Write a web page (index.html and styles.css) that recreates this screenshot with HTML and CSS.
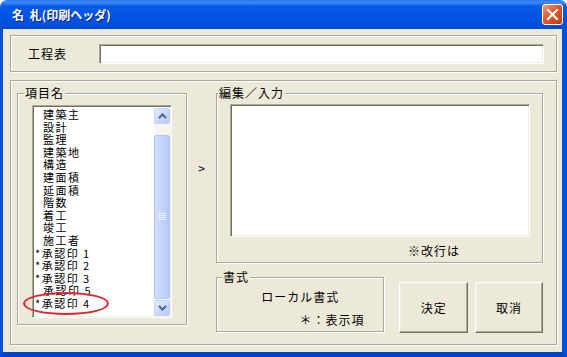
FILE: index.html
```html
<!DOCTYPE html>
<html lang="ja">

<head>
    <meta charset="UTF-8">
    <meta name="viewport" content="width=device-width, initial-scale=1.0">
    <title>名札(印刷ヘッダ)</title>
    <link rel="stylesheet" href="styles.css">
</head>

<body>
    <div class="window">
        <div class="titlebar">
            <span class="title">名 札(印刷ヘッダ)</span>
            <div class="close">
                <svg width="13" height="13" viewBox="0 0 13 13">
                    <path d="M2 2 L11 11 M11 2 L2 11" stroke="#fff" stroke-width="2.2" stroke-linecap="square" />
                </svg>
            </div>
        </div>

        <div class="client">
            <div class="frame header-frame">
                <span class="field-label">工程表</span>
                <div class="textbox header-box"></div>
            </div>

            <div class="frame main-frame">
                <div class="group item-group">
                    <span class="group-title">項目名</span>
                    <div class="listbox">
                        <ul class="items">
                            <li>建築主</li>
                            <li>設計</li>
                            <li>監理</li>
                            <li>建築地</li>
                            <li>構造</li>
                            <li>建面積</li>
                            <li>延面積</li>
                            <li>階数</li>
                            <li>着工</li>
                            <li>竣工</li>
                            <li>施工者</li>
                            <li class="mark">*承認印 1</li>
                            <li class="mark">*承認印 2</li>
                            <li class="mark">*承認印 3</li>
                            <li>承認印 5</li>
                            <li class="mark">*承認印 4</li>
                        </ul>
                        <div class="scrollbar">
                            <div class="sb-btn">
                                <svg width="9" height="6" viewBox="0 0 9 6">
                                    <path d="M1 5 L4.5 1.5 L8 5" fill="none" stroke="#4d6185" stroke-width="2" />
                                </svg>
                            </div>
                            <div class="sb-track">
                                <div class="sb-thumb"><span class="grip"></span></div>
                            </div>
                            <div class="sb-btn">
                                <svg width="9" height="6" viewBox="0 0 9 6">
                                    <path d="M1 1 L4.5 4.5 L8 1" fill="none" stroke="#4d6185" stroke-width="2" />
                                </svg>
                            </div>
                        </div>
                    </div>
                    <div class="highlight"></div>
                </div>

                <div class="arrow-col">&gt;</div>

                <div class="edit-col">
                    <div class="group edit-group">
                        <span class="group-title">編集／入力</span>
                        <div class="textbox edit-box"></div>
                        <div class="note">※改行は</div>
                    </div>

                    <div class="bottom-row">
                        <div class="group format-group">
                            <span class="group-title">書式</span>
                            <div class="format-name">ローカル書式</div>
                            <div class="format-note">＊：表示項</div>
                        </div>
                        <button type="button" class="btn ok-btn">決定</button>
                        <button type="button" class="btn cancel-btn">取消</button>
                    </div>
                </div>
            </div>
        </div>
    </div>
</body>

</html>
```

FILE: styles.css
```css
body {
    margin: 0;
    background-color: #fff;
    font-family: "Noto Sans CJK JP", "DejaVu Sans", sans-serif;
    font-size: 12px;
    color: #000;
}

.window {
    width: 567px;
    height: 357px;
    display: flex;
    flex-direction: column;
    border-radius: 7px 7px 0 0;
    overflow: hidden;
}

/* title bar */
.titlebar {
    height: 29px;
    flex-shrink: 0;
    display: flex;
    align-items: center;
    justify-content: space-between;
    background: linear-gradient(#2a73ee 0%, #3d8cfa 8%, #0a5ae6 22%, #0055e5 60%, #0049d6 100%);
}

.title {
    padding-left: 12px;
    color: #fff;
    font-weight: bold;
    font-size: 12px;
    line-height: 14px;
    word-spacing: 3px;
    text-shadow: 1px 1px 0 #0a1e80;
}

.close {
    width: 19px;
    height: 19px;
    margin-right: 4px;
    border: 1px solid #fff;
    border-radius: 3px;
    background: linear-gradient(135deg, #f09a7a 0%, #e2562b 45%, #c93c12 100%);
    display: flex;
    align-items: center;
    justify-content: center;
}

/* client area */
.client {
    flex: 1;
    box-sizing: border-box;
    background-color: #ece9d8;
    border-left: 3px solid #0050e0;
    border-right: 5px solid #0050e0;
    border-bottom: 5px solid #0044cc;
    padding-top: 6px;
}

.frame {
    box-sizing: border-box;
    width: 547px;
    margin-left: 7px;
    border: 1px solid #aca899;
    box-shadow: inset 1px 1px 0 #fff, 1px 1px 0 #fff;
}

.header-frame {
    height: 37px;
    display: flex;
    align-items: center;
    padding-left: 17px;
}

.field-label {
    width: 71px;
    letter-spacing: 1px;
}

.textbox {
    box-sizing: border-box;
    background-color: #fff;
    border: 1px solid;
    border-color: #aca899 #fff #fff #aca899;
    box-shadow: inset 1px 1px 0 #716f64, inset -1px -1px 0 #f1efe2;
}

.header-box {
    width: 445px;
    height: 20px;
}

.main-frame {
    height: 265px;
    margin-top: 8px;
    padding: 12px 0 0 6px;
    display: flex;
    align-items: flex-start;
}

/* group boxes */
.group {
    position: relative;
    box-sizing: border-box;
    border: 1px solid #aca899;
    box-shadow: inset 1px 1px 0 #fff, 1px 1px 0 #fff;
}

.group-title {
    position: absolute;
    top: -8px;
    padding: 0 1px;
    line-height: 14px;
    background-color: #ece9d8;
    letter-spacing: 1px;
}

.item-group {
    width: 170px;
    height: 232px;
}

.item-group .group-title {
    left: 6px;
}

.listbox {
    box-sizing: border-box;
    width: 140px;
    height: 213px;
    margin: 11px 0 0 14px;
    display: flex;
    background-color: #fff;
    border: 1px solid;
    border-color: #aca899 #fff #fff #aca899;
    box-shadow: inset 1px 1px 0 #716f64, inset -1px -1px 0 #f1efe2;
    padding: 2px 1px 1px 2px;
}

.items {
    flex: 1;
    margin: 0;
    padding: 0 0 0 8px;
    list-style: none;
    font-size: 11px;
    line-height: 12.6px;
    letter-spacing: 1.5px;
    white-space: nowrap;
}

.items .mark {
    text-indent: -8px;
}

.scrollbar {
    width: 16px;
    display: flex;
    flex-direction: column;
    background-color: #f6f5f0;
}

.sb-btn {
    box-sizing: border-box;
    height: 16px;
    display: flex;
    align-items: center;
    justify-content: center;
    border: 1px solid #c4d3fb;
    border-radius: 2px;
    background: linear-gradient(135deg, #e3ebfe 0%, #c6d6fc 60%, #b4c8f6 100%);
}

.sb-track {
    flex: 1;
    display: flex;
    padding: 11px 0 1px;
}

.sb-thumb {
    flex: 1;
    display: flex;
    align-items: center;
    justify-content: center;
    border: 1px solid #b2c6f5;
    border-radius: 2px;
    background: linear-gradient(90deg, #d0defd 0%, #c2d4fc 50%, #b5c9f8 100%);
}

.grip {
    width: 8px;
    height: 8px;
    background: repeating-linear-gradient(#eef3fe 0, #eef3fe 1px, transparent 1px, transparent 2px);
}

.highlight {
    position: absolute;
    left: 5px;
    top: 198px;
    width: 86px;
    height: 23px;
    box-sizing: border-box;
    border: 2px solid #e0242c;
    border-radius: 50%;
}

.arrow-col {
    width: 29px;
    padding-top: 68px;
    text-align: center;
    line-height: 14px;
}

.edit-col {
    width: 327px;
    display: flex;
    flex-direction: column;
}

.edit-group {
    height: 170px;
}

.edit-group .group-title {
    left: 1px;
}

.edit-box {
    width: 300px;
    height: 133px;
    margin: 10px 0 0 13px;
}

.note {
    margin-top: 7px;
    padding-left: 191px;
    line-height: 14px;
    letter-spacing: 1px;
}

.bottom-row {
    margin-top: 14px;
    display: flex;
    align-items: flex-start;
}

.format-group {
    width: 169px;
    height: 55px;
}

.format-group .group-title {
    left: 5px;
}

.format-name {
    padding-top: 12px;
    text-align: center;
    line-height: 14px;
    letter-spacing: 1px;
}

.format-note {
    margin-top: 9px;
    padding-right: 19px;
    text-align: right;
    line-height: 14px;
    letter-spacing: 1px;
}

.btn {
    box-sizing: border-box;
    height: 51px;
    margin-top: 5px;
    padding: 0;
    font-family: inherit;
    font-size: 12px;
    letter-spacing: 1px;
    color: #000;
    background-color: #ece9d8;
    border: 1px solid;
    border-color: #fff #716f64 #716f64 #fff;
    box-shadow: inset -1px -1px 0 #aca899, inset 1px 1px 0 #f1efe2;
}

.ok-btn {
    width: 69px;
    margin-left: 15px;
}

.cancel-btn {
    width: 68px;
    margin-left: 7px;
}
```
